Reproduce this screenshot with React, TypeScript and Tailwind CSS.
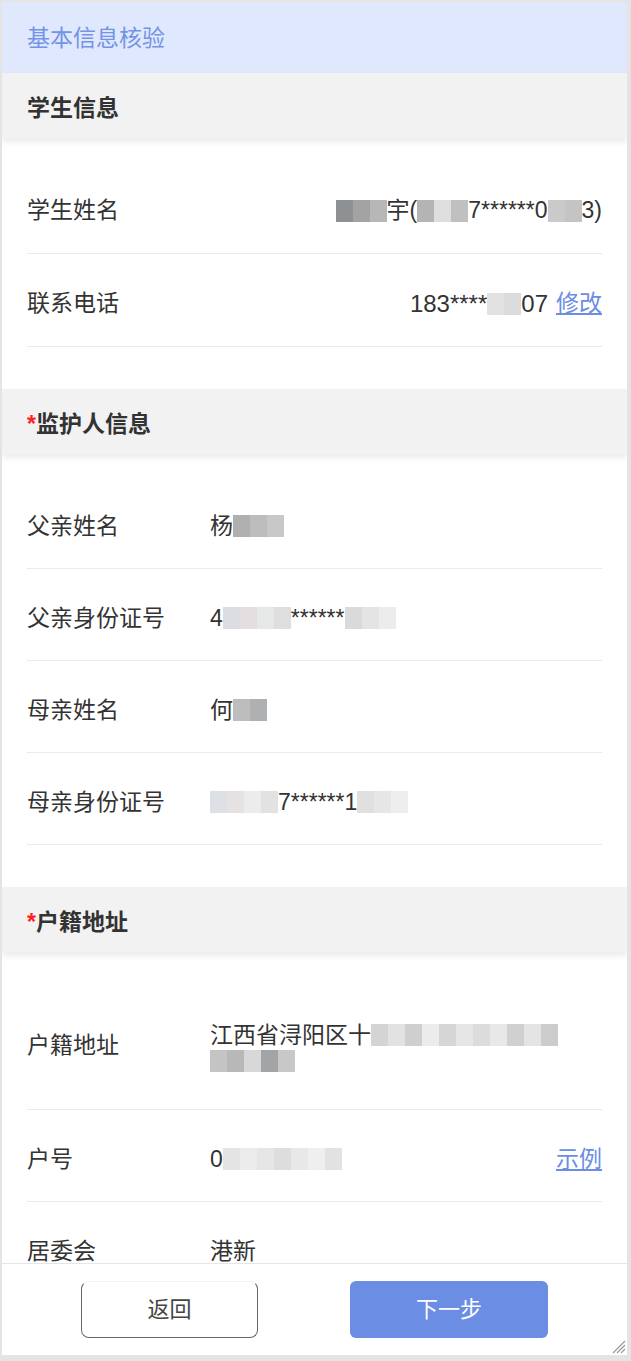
import React from 'react';

const font = "font-['Liberation_Sans','Noto_Sans_CJK_SC',sans-serif]";

function Mosaic({ cells, h = 'h-[22px]' }: { cells: string[]; h?: string }) {
    return (
        <span className={`inline-flex align-middle ${h}`}>
            {cells.map((c, i) => (
                <span key={i} className={`inline-block w-[17px] h-full ${c}`} />
            ))}
        </span>
    );
}

function SectionHeader({ title, required }: { title: string; required?: boolean }) {
    return (
        <div className="relative z-10 h-[65px] bg-[#f2f2f2] flex items-center px-[25px] pt-[5px] shadow-[0_4px_6px_rgba(0,0,0,0.08)]">
            <span className="text-[23px] font-bold text-[#333]">
                {required && <span className="text-[#ff2020]">*</span>}
                {title}
            </span>
        </div>
    );
}

function Row({ label, children, right, tall }: { label: string; children?: React.ReactNode; right?: React.ReactNode; tall?: boolean }) {
    return (
        <div className={`flex items-center border-b border-[#e8eaf2] pt-[7px] ${tall ? 'h-[135px]' : 'h-[92px]'}`}>
            <div className="w-[183px] shrink-0 text-[#333]">{label}</div>
            <div className="flex-1 text-[#333] leading-[30px]">{children}</div>
            {right}
        </div>
    );
}

export default function App() {
    return (
        <div className={`w-[631px] h-[1361px] bg-[#e4e4e4] pt-[2px] pl-[2px] pr-[4px] pb-[6px] ${font} text-[23px]`}>
            <div className="relative h-full bg-white flex flex-col overflow-hidden">
                <div className="flex-1 overflow-hidden">
                    <div className="h-[71px] bg-[#dfe8fd] flex items-center px-[25px] pt-[2px] text-[#7393e8]">基本信息核验</div>

                    <SectionHeader title="学生信息" />
                    <div className="px-[25px] pt-[23px] pb-[42px]">
                        <div className="flex items-center border-b border-[#e8eaf2] h-[93px] pt-[7px]">
                            <div className="flex-1 text-[#333]">学生姓名</div>
                            <div className="text-[#333] flex items-center">
                                <Mosaic cells={['bg-[#8d9194]', 'bg-[#a3a3a3]', 'bg-[#b7b7b7]']} />
                                <span>宇(</span>
                                <Mosaic cells={['bg-[#b4b4b4]', 'bg-[#dedede]', 'bg-[#c0c0c0]']} />
                                <span>7******0</span>
                                <Mosaic cells={['bg-[#cacaca]', 'bg-[#c4c4c4]']} />
                                <span>3)</span>
                            </div>
                        </div>
                        <div className="flex items-center border-b border-[#e8eaf2] h-[93px] pt-[7px]">
                            <div className="flex-1 text-[#333]">联系电话</div>
                            <div className="text-[#333] flex items-center">
                                <span className="text-[24px]">183****</span>
                                <Mosaic cells={['bg-[#e2e2e2]', 'bg-[#dcdcdc]']} />
                                <span className="text-[24px]">07</span>
                                <a className="ml-[8px] text-[#6b8de3] underline underline-offset-2">修改</a>
                            </div>
                        </div>
                    </div>

                    <SectionHeader title="监护人信息" required />
                    <div className="px-[25px] pt-[23px] pb-[42px]">
                        <Row label="父亲姓名">
                            <span className="flex items-center">
                                <span>杨</span>
                                <Mosaic cells={['bg-[#b0b0b0]', 'bg-[#bdbdbd]', 'bg-[#c8c8c8]']} />
                            </span>
                        </Row>
                        <Row label="父亲身份证号">
                            <span className="flex items-center">
                                <span>4</span>
                                <Mosaic cells={['bg-[#dcdde0]', 'bg-[#e3dedf]', 'bg-[#e6e8e8]', 'bg-[#dedede]']} />
                                <span>******</span>
                                <Mosaic cells={['bg-[#dadada]', 'bg-[#e4e4e4]', 'bg-[#ececec]']} />
                            </span>
                        </Row>
                        <Row label="母亲姓名">
                            <span className="flex items-center">
                                <span>何</span>
                                <Mosaic cells={['bg-[#bdbdbd]', 'bg-[#aeb0b2]']} />
                            </span>
                        </Row>
                        <Row label="母亲身份证号">
                            <span className="flex items-center">
                                <Mosaic cells={['bg-[#dde0e4]', 'bg-[#e6e2e2]', 'bg-[#ececec]', 'bg-[#e2e2e2]']} />
                                <span>7******1</span>
                                <Mosaic cells={['bg-[#e0e0e0]', 'bg-[#e6e6e6]', 'bg-[#eeeeee]']} />
                            </span>
                        </Row>
                    </div>

                    <SectionHeader title="户籍地址" required />
                    <div className="px-[25px] pt-[23px]">
                        <Row label="户籍地址" tall>
                            <div className="flex items-center">
                                <span>江西省浔阳区十</span>
                                <Mosaic cells={['bg-[#d4d4d4]', 'bg-[#e2e2e2]', 'bg-[#cfcfcf]', 'bg-[#ececec]', 'bg-[#d6d6d6]', 'bg-[#e6e6e6]', 'bg-[#dcdcdc]', 'bg-[#e8e8e8]', 'bg-[#d0d0d0]', 'bg-[#e4e4e4]', 'bg-[#cccccc]']} />
                            </div>
                            <div className="flex items-center">
                                <Mosaic cells={['bg-[#c4c4c4]', 'bg-[#b8b8b8]', 'bg-[#d8d8d8]', 'bg-[#a2a4a6]', 'bg-[#c8c8c8]']} />
                            </div>
                        </Row>
                        <Row label="户号" right={<a className="text-[#6b8de3] underline underline-offset-2">示例</a>}>
                            <span className="flex items-center">
                                <span>0</span>
                                <Mosaic cells={['bg-[#e4e4e4]', 'bg-[#ececec]', 'bg-[#e6e6e6]', 'bg-[#dddddd]', 'bg-[#e8e8e8]', 'bg-[#efefef]', 'bg-[#e2e2e2]']} />
                            </span>
                        </Row>
                        <Row label="居委会">港新</Row>
                    </div>
                </div>

                <div className="h-[92px] shrink-0 border-t border-[#e6e6e6] bg-white flex justify-center gap-[92px] pt-[17px]">
                    <button className="w-[177px] h-[57px] rounded-[8px] border-[1.5px] border-solid border-x-[#666] border-b-[#666] border-t-[#f4f4f4] text-[#444] text-[22px]">返回</button>
                    <button className="w-[198px] h-[57px] rounded-[6px] bg-[#6b8de3] text-white text-[22px]">下一步</button>
                </div>

                <svg className="absolute right-[1px] bottom-[1px]" width="16" height="16" viewBox="0 0 16 16">
                    <path d="M15 3 L3 15 M15 7 L7 15 M15 11 L11 15" stroke="#9a9a9a" strokeWidth="1.2" />
                </svg>
            </div>
        </div>
    );
}
